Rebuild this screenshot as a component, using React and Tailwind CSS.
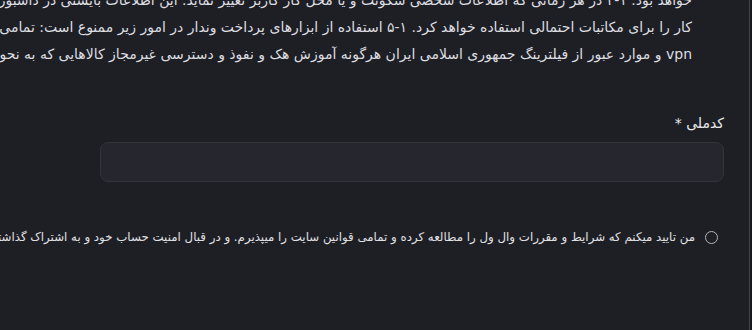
const lines = [
  "خواهد بود. ۱-۴ در هر زمانی که اطلاعات شخصی سکونت و یا محل کار کاربر تغییر نماید؛ این اطلاعات بایستی در داشبورد وال ول به روز رسانی شود",
  "کار را برای مکاتبات احتمالی استفاده خواهد کرد. ۱-۵ استفاده از ابزارهای پرداخت وندار در امور زیر ممنوع است: تمامی موارد مربوط به فروش",
  "vpn و موارد عبور از فیلترینگ جمهوری اسلامی ایران هرگونه آموزش هک و نفوذ و دسترسی غیرمجاز کالاهایی که به نحوی قاچاق محسوب می‌شوند",
];

const App = () => {
  return (
    <div
      dir="rtl"
      className="flex h-[330px] w-full overflow-hidden bg-[#1e1f24]"
      style={{ fontFamily: '"DejaVu Sans", sans-serif' }}
    >
      {/* scrollbar strip */}
      <div className="w-[3px] shrink-0 border-l border-[#44454b] bg-[#17181c]" />

      <div className="flex min-w-0 flex-1 flex-col pr-[25px]">
        {/* terms text, scrolled */}
        <div className="-mt-[13px] overflow-hidden pr-[32px] text-[14px] leading-[27px] text-[#dcdde0]">
          {lines.map((line, i) => (
            <p key={i} className="whitespace-nowrap">{line}</p>
          ))}
        </div>

        {/* national code field */}
        <div className="mt-[45px] flex flex-col pl-[100px]">
          <label className="text-[14px] leading-5 text-[#e8e9ec]">کدملی *</label>
          <div className="mt-[9px] h-10 rounded-lg border border-[#33343b] bg-[#25262e]" />
        </div>

        {/* terms agreement */}
        <div className="mt-[45px] flex items-center gap-[10px] pr-[6px]">
          <span className="h-[13px] w-[13px] shrink-0 rounded-full border-[1.5px] border-[#b4b5b8]" />
          <span className="whitespace-nowrap text-[11.8px] leading-5 text-[#e0e1e4]">
            من تایید میکنم که شرایط و مقررات وال ول را مطالعه کرده و تمامی قوانین سایت را میپذیرم. و در قبال امنیت حساب خود و به اشتراک گذاشتن اطلاعات آن مسئول هستم
          </span>
        </div>
      </div>
    </div>
  );
};

export default App;
